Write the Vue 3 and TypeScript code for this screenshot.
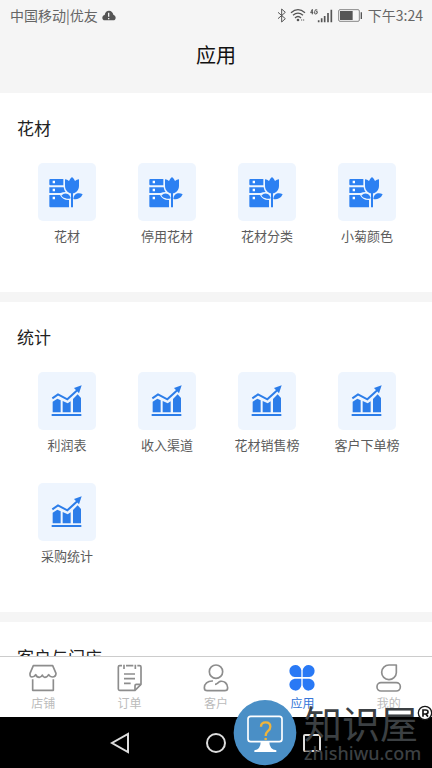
<script setup lang="ts">
import { ref } from 'vue'

type Icon = 'flower' | 'chart'
interface Section {
  title: string
  icon: Icon
  items: string[]
}

const sections: Section[] = [
  { title: '花材', icon: 'flower', items: ['花材', '停用花材', '花材分类', '小菊颜色'] },
  { title: '统计', icon: 'chart', items: ['利润表', '收入渠道', '花材销售榜', '客户下单榜', '采购统计'] },
  { title: '客户与门店', icon: 'chart', items: [] },
]

const tabs = [
  { id: 'shop', label: '店铺' },
  { id: 'order', label: '订单' },
  { id: 'customer', label: '客户' },
  { id: 'apps', label: '应用' },
  { id: 'mine', label: '我的' },
]
const active = ref('apps')
</script>

<template>
  <div class="screen">
    <header class="top">
      <div class="status">
        <span>中国移动|优友</span>
        <svg class="cloud" width="14" height="11" viewBox="0 0 42 33">
          <path d="M9 31C3 31 1 27 1 23c0-4 3-7 7-8C9 6 15 2 21 2c7 0 12 5 13 12 4 1 7 5 7 9 0 5-3 8-8 8z" fill="#555" />
          <path d="M20 8v12M20 24v4" stroke="#f5f5f5" stroke-width="4" />
        </svg>
        <span class="grow"></span>
        <svg width="10" height="15" viewBox="0 0 30 45">
          <path d="M3 13l22 19-11 10V3l11 10L3 32" fill="none" stroke="#555" stroke-width="3" />
        </svg>
        <svg class="wifi" width="16" height="14" viewBox="0 0 48 42">
          <g fill="none" stroke="#555" stroke-width="4">
            <path d="M3 14Q24-4 45 14" />
            <path d="M9 22Q24 9 39 22" />
            <path d="M15 30Q24 21 33 30" />
          </g>
          <circle cx="24" cy="36" r="4" fill="#555" />
          <path d="M35 33v6M41 33v6" stroke="#999" stroke-width="3" />
        </svg>
        <svg class="signal" width="23" height="15" viewBox="0 0 69 45">
          <g fill="none" stroke="#555" stroke-width="3">
            <path d="M7 19V4L2 14h8M22 6q-7-4-8 5t3 7q6 0 5-7h-4" />
          </g>
          <path d="M26 43v-6M35 43V31M44 43V24M54 43V15M64 43V5" stroke="#555" stroke-width="5" />
        </svg>
        <svg class="battery" width="25" height="13" viewBox="0 0 75 39">
          <rect x="2" y="2" width="62" height="35" rx="4" fill="none" stroke="#888" stroke-width="3" />
          <path d="M6 6h38v27H6z" fill="#555" />
          <path d="M70 10v20" stroke="#555" stroke-width="4" />
        </svg>
        <time>下午3:24</time>
      </div>
      <h1>应用</h1>
    </header>

    <main class="content">
      <section v-for="s in sections" :key="s.title" class="section">
        <h2>{{ s.title }}</h2>
        <div class="grid">
          <button v-for="item in s.items" :key="item" type="button" class="app">
            <span class="tile">
              <svg v-if="s.icon === 'flower'" width="36" height="36" viewBox="0 0 108 108">
                <path
                  d="M4 15h39v19H4q-3 0-3-3V18q0-3 3-3zM1 40h43q1 9 6 14-9 0-15 3H1zM1 63h32q8 16 27 15v22H4q-3 0-3-3z"
                  fill="#2c80f2"
                />
                <path d="M11 20h7v8h-7zM11 44h7v8h-7zM11 68h7v8h-7z" fill="#fff" />
                <path d="M69 54v46" stroke="#2c80f2" stroke-width="6" />
                <g fill="#2c80f2">
                  <path d="M48 16q7 0 12 5 3-7 9-12 6 5 9 12 5-5 12-5v20q0 16-15 22H63Q48 52 48 36z" />
                  <path d="M37 65q7-8 16-6 10 2 12 14-8 3-15 0-8-2-13-8z" />
                  <path d="M101 61q-6-4-15-3-12 3-13 17 9 2 17-2 8-4 11-12z" />
                </g>
              </svg>
              <svg v-else width="36" height="36" viewBox="0 0 108 108">
                <g fill="#2c7de9">
                  <path d="M8 93h89v6H8zM11 88V56l14-9 10 5v36zM41 88V54l15 7 9-6v33zM72 88V48l14-14 10 11v43z" />
                  <path d="M98 7L75 15l15 16z" />
                </g>
                <path d="M10 46l17-12 28 15 33-30" fill="none" stroke="#2c7de9" stroke-width="6" />
              </svg>
            </span>
            <span class="label">{{ item }}</span>
          </button>
        </div>
      </section>
    </main>

    <nav class="tabs">
      <button
        v-for="t in tabs" :key="t.id" type="button" class="tab"
        :class="{ on: active === t.id }" @click="active = t.id"
      >
        <svg width="30" height="28" viewBox="0 0 90 84" fill="none" stroke="#8d8d8d" stroke-width="5" stroke-linejoin="round">
          <g v-if="t.id === 'shop'">
            <path d="M16 5h58l10 23q0 11-11 11-7 0-11-7-4 8-12 8-5 0-7-7-3 7-9 7-8 0-11-8-4 7-11 7Q5 39 6 28z" />
            <path d="M14 46v33h62V46" />
          </g>
          <g v-else-if="t.id === 'order'">
            <path d="M21 5h-7q-4 0-4 4v66q0 4 4 4h46l18-18V9q0-4-4-4h-7M33 5h22" />
            <path d="M27 2v13M61 2v13M60 79V65q0-4 4-4h14M27 30h33M27 44h33M27 58h20" />
          </g>
          <g v-else-if="t.id === 'customer'">
            <circle cx="45" cy="23" r="20" />
            <path d="M36 51c-17-1-26 9-26 20q0 9 9 9h52q9 0 9-9c0-12-10-21-22-19-6 1-9 9-16 9" />
          </g>
          <g v-else-if="t.id === 'apps'" fill="#2979f5" stroke="none">
            <path d="M43 39H23A18 18 0 1 1 43 19zM47 39V19A18 18 0 1 1 67 39zM43 44v20A18 18 0 1 1 23 44zM47 44h20A18 18 0 1 1 47 64z" />
          </g>
          <g v-else>
            <path d="M45 3h22v23a22 22 0 1 1-22-23z" />
            <rect x="9" y="56" width="70" height="25" rx="12" />
          </g>
        </svg>
        <span>{{ t.label }}</span>
      </button>
    </nav>

    <footer class="system">
      <button type="button" aria-label="返回">
        <svg width="20" height="22" viewBox="0 0 20 22"><path d="M18 2v18L2 11z" /></svg>
      </button>
      <button type="button" aria-label="主屏幕">
        <svg width="22" height="22" viewBox="0 0 22 22"><circle cx="11" cy="11" r="9" /></svg>
      </button>
      <button type="button" aria-label="最近任务">
        <svg width="20" height="20" viewBox="0 0 20 20"><rect x="2" y="2" width="16" height="16" rx="1" /></svg>
      </button>
    </footer>

    <aside class="mark">
      <svg width="64" height="66" viewBox="0 0 192 198">
        <ellipse cx="96" cy="98" rx="94" ry="98" fill="#4a8fc6" />
        <rect x="45" y="49" width="102" height="76" rx="8" fill="none" stroke="#fff" stroke-width="5" />
        <path d="M83 126h26q0 22 21 25v5H64v-5q19-3 19-25z" fill="#fff" />
        <path d="M84 80Q84 67 98 67t14 13q0 8-8 14-6 5-6 14" fill="none" stroke="#efb43c" stroke-width="7" />
        <circle cx="98" cy="117" r="4" fill="#efb43c" />
      </svg>
      <div class="brand">
        <strong>知识屋</strong>
        <span>zhishiwu.com</span>
      </div>
      <svg class="reg" width="16" height="16" viewBox="0 0 48 48">
        <circle cx="24" cy="24" r="20" fill="#fff" stroke="#161616" stroke-width="4" />
        <path d="M18 35V15h8q7 0 7 6t-7 6h-8m8 0l7 8" fill="none" stroke="#161616" stroke-width="5" />
      </svg>
    </aside>
  </div>
</template>

<style>
body {
  margin: 0;
}
</style>

<style scoped>
.screen {
  position: relative;
  display: flex;
  flex-direction: column;
  height: 100vh;
  overflow: hidden;
  background: #f5f5f5;
  color: #222;
  font-family: 'Noto Sans CJK SC', 'Noto Sans', sans-serif;
}
button {
  display: flex;
  align-items: center;
  padding: 0;
  border: 0;
  background: none;
  color: inherit;
  font: inherit;
}
svg {
  flex: none;
}
.top {
  flex: none;
  height: 93px;
}
.status {
  display: flex;
  align-items: center;
  height: 30px;
  padding: 0 9px 0 10px;
  color: #666;
  font-size: 14px;
  line-height: 30px;
}
.cloud {
  margin-left: 4px;
}
.grow {
  flex: 1;
}
.wifi {
  margin-left: 3px;
}
.signal {
  margin: 0 5px 0 4px;
}
.battery {
  margin-right: 5px;
}
h1 {
  margin: 10px 0 0;
  color: #111;
  font-size: 20px;
  font-weight: 400;
  line-height: 30px;
  text-align: center;
}
.content {
  display: flex;
  flex: 1;
  flex-direction: column;
  gap: 10px;
  min-height: 0;
  overflow: hidden;
}
.section {
  flex: none;
  padding: 0 15px 18px 17px;
  background: #fff;
}
h2 {
  margin: 0;
  padding: 20px 0;
  font-size: 17px;
  font-weight: 400;
  line-height: 30px;
}
.grid {
  display: grid;
  grid-template-columns: repeat(4, 1fr);
}
.app {
  flex-direction: column;
  height: 111px;
}
.tile {
  display: flex;
  align-items: center;
  justify-content: center;
  width: 58px;
  height: 58px;
  border-radius: 5px;
  background: #eef5fe;
}
.label {
  margin-top: 5px;
  color: #5c5c5c;
  font-size: 13px;
  line-height: 20px;
  white-space: nowrap;
}
.tabs {
  display: flex;
  flex: none;
  height: 60px;
  border-top: 1px solid #ccc;
  background: #fff;
}
.tab {
  flex: 1;
  flex-direction: column;
  padding-top: 7px;
  color: #bbb;
  font-size: 12px;
  line-height: 22px;
}
.tab.on {
  color: #3576d8;
}
.system {
  display: flex;
  flex: none;
  align-items: center;
  justify-content: center;
  gap: 75px;
  height: 51px;
  background: #000;
}
.system svg {
  fill: none;
  stroke: #ddd;
  stroke-width: 2;
}
.mark {
  position: absolute;
  right: 0;
  bottom: 2px;
  display: flex;
  gap: 7px;
  width: 199px;
  pointer-events: none;
}
.brand {
  display: flex;
  flex-direction: column;
  color: #3c4043;
}
.brand strong {
  font-size: 38px;
  font-weight: 400;
  line-height: 44px;
}
.brand span {
  font-family: 'Noto Sans', sans-serif;
  font-size: 18px;
  font-weight: 500;
  line-height: 18px;
}
.reg {
  position: absolute;
  top: 5px;
  right: -1px;
}
</style>
